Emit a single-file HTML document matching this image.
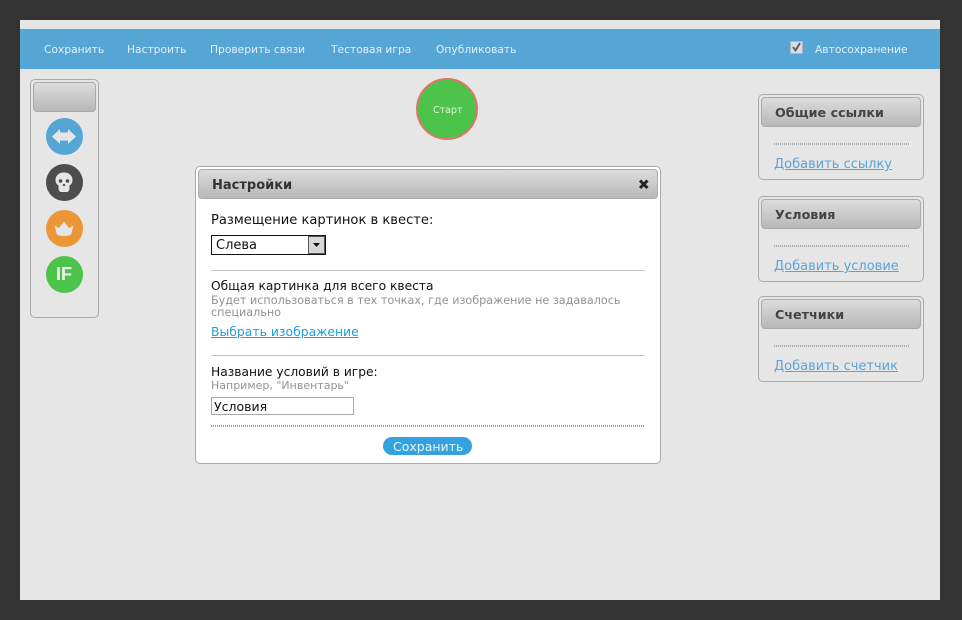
<!DOCTYPE html>
<html><head><meta charset="utf-8"><style>
html,body{margin:0;padding:0;width:962px;height:620px;overflow:hidden;background:#333;font-family:"DejaVu Sans","Liberation Sans",sans-serif}
div,a,span{position:absolute;white-space:nowrap;box-sizing:border-box}
.nav{top:42px;font-size:10.7px;line-height:16px;color:#e3f0f8}
.panel{border:1px solid #aaa;border-radius:5px}
.hd{background:linear-gradient(#dcdcdc,#b8b8b8);border:1px solid #aaa;border-radius:4px}
.ptitle{left:13px;top:7px;font-size:12.7px;line-height:16px;font-weight:bold;color:#444}
.dots{height:2px;background:repeating-linear-gradient(90deg,#999 0 1px,transparent 1px 2px)}
.panel .dots{background:repeating-linear-gradient(90deg,#aaa 0 1px,transparent 1px 2px)}
.lnk{font-size:13px;line-height:16px;color:#5aa5d5;text-decoration:underline}
.t{font-size:12.25px;line-height:16px;color:#111}
.g{font-size:11.2px;line-height:13px;color:#939393}
.c{width:37px;height:37px;left:45.5px;border-radius:50%}
svg{position:absolute;left:0;top:0}
</style></head><body>
<div style="left:20px;top:20px;width:920px;height:580px;background:#e6e6e6"></div>
<div style="left:20px;top:29px;width:920px;height:40px;background:#55a5d5"></div>
<span class="nav" style="left:44px">Сохранить</span>
<span class="nav" style="left:127px">Настроить</span>
<span class="nav" style="left:210px">Проверить связи</span>
<span class="nav" style="left:331px">Тестовая игра</span>
<span class="nav" style="left:436px">Опубликовать</span>
<div style="left:790px;top:41px;width:13px;height:13px;background:#d5dce3;border:1px solid #aab5be"></div>
<svg width="962" height="620" style="z-index:2"><path d="M793 47l2.500 3.500 4.500-7.500" fill="none" stroke="#5a5a5a" stroke-width="1.800"/></svg>
<span class="nav" style="left:815px;top:42px">Автосохранение</span>

<div class="panel" style="left:30px;top:79px;width:69px;height:239px"></div>
<div class="hd" style="left:33px;top:82px;width:63px;height:30px"></div>
<div class="c" style="top:118px;background:#55a5d5"></div>
<div class="c" style="top:164px;background:#4d4d4d"></div>
<div class="c" style="top:210px;background:#ec9636"></div>
<div class="c" style="top:256px;background:#4cc44c"></div>
<svg width="962" height="620" style="z-index:2">
<path d="M52 136.500l8-7.500v3.500h8v-3.500l8 7.500-8 7.500v-3.500h-8v3.500z" fill="#e6e6e6"/>
<path d="M64 172.500c5 0 8.500 3 8.500 7.500 0 3-1.500 4.500-3 5.500v3c0 1.500-1 3-2 3.500h-7c-1-.5-2-2-2-3.500v-3c-1.500-1-3-2.500-3-5.500 0-4.500 3.500-7.500 8.500-7.500z" fill="#e6e6e6"/>
<circle cx="60.500" cy="181" r="1.800" fill="#4d4d4d"/><circle cx="67.500" cy="181" r="1.800" fill="#4d4d4d"/>
<path d="M63.200 184h1.600l.5 2h-2.600z" fill="#4d4d4d"/>
<path d="M54.500 225.500l4.500 2.500 5-6.500 5 6.500 4.500-2.500-2 8c-1 2-3.500 2.500-7.500 2.500s-6.500-.5-7.500-2.500z" fill="#e6e6e6"/>
</svg>
<span style="left:45.500px;width:37px;top:264px;text-align:center;z-index:2;font:bold 18px/20px 'Liberation Sans',sans-serif;color:#eef2ee">IF</span>

<div style="left:416px;top:78px;width:62px;height:62px;border-radius:50%;background:#4cc44c;border:2px solid #e0736a"></div>
<span style="left:433px;top:104px;font-size:9.500px;line-height:13px;color:#e4f5e0">Старт</span>

<div class="panel" style="left:758px;top:94px;width:166px;height:86px">
<div class="hd" style="left:2px;top:2px;width:160px;height:30px"><span class="ptitle">Общие ссылки</span></div>
<div class="dots" style="left:15px;top:48px;width:135px"></div>
<a class="lnk" style="left:15px;top:62px">Добавить ссылку</a></div>
<div class="panel" style="left:758px;top:196px;width:166px;height:86px">
<div class="hd" style="left:2px;top:2px;width:160px;height:30px"><span class="ptitle">Условия</span></div>
<div class="dots" style="left:15px;top:48px;width:135px"></div>
<a class="lnk" style="left:15px;top:62px">Добавить условие</a></div>
<div class="panel" style="left:758px;top:296px;width:166px;height:86px">
<div class="hd" style="left:2px;top:2px;width:160px;height:30px"><span class="ptitle">Счетчики</span></div>
<div class="dots" style="left:15px;top:48px;width:135px"></div>
<a class="lnk" style="left:15px;top:62px">Добавить счетчик</a></div>

<div style="left:195px;top:166px;width:466px;height:298px;background:#fff;border:1px solid #aaa;border-radius:5px"></div>
<div class="hd" style="left:198px;top:169px;width:460px;height:30px"></div>
<span style="left:212px;top:178px;font-size:13px;line-height:16px;font-weight:bold;color:#333">Настройки</span>
<svg width="962" height="620" style="z-index:2"><path d="M640 180.500l7.500 7.500m0-7.500l-7.500 7.500" stroke="#222" stroke-width="3" fill="none"/></svg>
<span class="t" style="left:211px;top:213px;font-size:13.1px">Размещение картинок в квесте:</span>
<div style="left:211px;top:235px;width:115px;height:20px;border:1px solid #111"></div>
<span class="t" style="left:216px;top:238px;font-size:13px">Слева</span>
<div style="left:308px;top:236px;width:17px;height:18px;background:#d8d8d8;border:1px solid #555"></div>
<svg width="962" height="620" style="z-index:2"><path d="M313 243h7l-3.500 4z" fill="#111"/></svg>
<div style="left:211px;top:270px;width:434px;height:1px;background:#c4c4c4"></div>
<span class="t" style="left:211px;top:278px">Общая картинка для всего квеста</span>
<span class="g" style="left:211px;top:294px">Будет использоваться в тех точках, где изображение не задавалось</span>
<span class="g" style="left:211px;top:306px">специально</span>
<a class="lnk" style="left:211px;top:324px;color:#1f9fd8;font-size:12.4px">Выбрать изображение</a>
<div style="left:211px;top:355px;width:434px;height:1px;background:#c4c4c4"></div>
<span class="t" style="left:211px;top:364px">Название условий в игре:</span>
<span class="g" style="left:211px;top:379px;font-size:11px">Например, "Инвентарь"</span>
<div style="left:211px;top:397px;width:143px;height:18px;border:1px solid #aaa;background:#fff"></div>
<span class="t" style="left:214px;top:399px;font-size:12.500px">Условия</span>
<div class="dots" style="left:211px;top:425px;width:434px"></div>
<div style="left:383px;top:437px;width:89px;height:18px;border-radius:9px;background:#35a2e0"></div>
<span class="t" style="left:393px;top:439px;color:#e8f5fc;font-size:12.5px">Сохранить</span>
</body></html>
